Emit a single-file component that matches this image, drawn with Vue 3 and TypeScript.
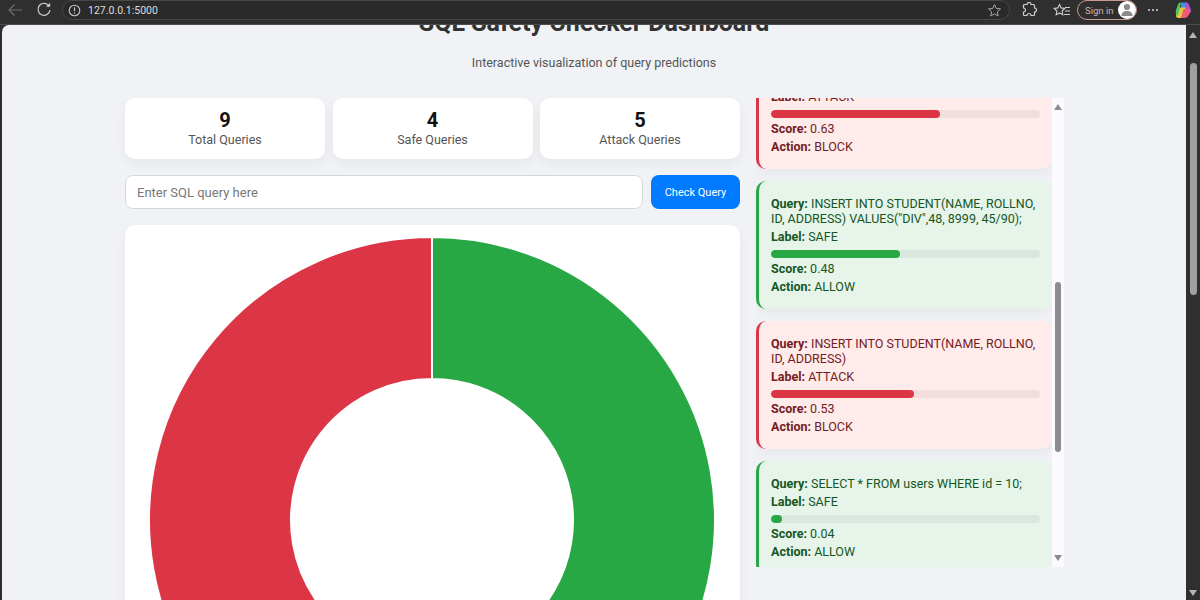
<script setup lang="ts">
interface Entry {
  query: string
  label: 'SAFE' | 'ATTACK'
  score: number
  action: string
}

const stats = [
  { value: 9, name: 'Total Queries' },
  { value: 4, name: 'Safe Queries' },
  { value: 5, name: 'Attack Queries' },
]

const entries: Entry[] = [
  { query: 'DROP TABLE STUDENT;', label: 'ATTACK', score: 0.63, action: 'BLOCK' },
  { query: 'INSERT INTO STUDENT(NAME, ROLLNO, ID, ADDRESS) VALUES("DIV",48, 8999, 45/90);', label: 'SAFE', score: 0.48, action: 'ALLOW' },
  { query: 'INSERT INTO STUDENT(NAME, ROLLNO, ID, ADDRESS)', label: 'ATTACK', score: 0.53, action: 'BLOCK' },
  { query: 'SELECT * FROM users WHERE id = 10;', label: 'SAFE', score: 0.04, action: 'ALLOW' },
]
</script>

<template>
  <div class="window">
    <header class="toolbar">
      <svg class="tool back" width="16" height="14" viewBox="0 0 16 14"><path d="M15 7H2M7.500 1.500 2 7l5.500 5.500" fill="none" stroke="#6f6f6f" stroke-width="1.200"/></svg>
      <svg class="tool reload" width="16" height="16" viewBox="0 0 16 16"><path d="M13.200 4.200A6 6 0 1 0 14 8" fill="none" stroke="#d0d0d0" stroke-width="1.200"/><path d="M10 4.700h4.200V.8z" fill="#d0d0d0"/></svg>
      <div class="address">
        <svg width="13" height="13" viewBox="0 0 13 13"><circle cx="6.500" cy="6.500" r="5.300" fill="none" stroke="#c4c4c4" stroke-width="1.100"/><path d="M6.500 3.200v4M6.500 8.500v1.300" stroke="#c4c4c4" stroke-width="1.200"/></svg>
        <span class="url">127.0.0.1:5000</span>
        <svg class="star" width="15" height="15" viewBox="0 0 15 15"><path d="m7.500 1.500 1.800 3.900 4.200.5-3.100 2.900.8 4.200-3.700-2.100-3.700 2.100.8-4.200-3.100-2.900 4.200-.5z" fill="none" stroke="#a8a8a8" stroke-width="1"/></svg>
      </div>
      <svg class="tool puzzle" width="16" height="16" viewBox="0 0 16 16"><path d="M6 2.500a2 2 0 0 1 4 0h2.500a1 1 0 0 1 1 1V6a2 2 0 0 1 0 4v2.500a1 1 0 0 1-1 1H10a2 2 0 0 0-4 0H3.500a1 1 0 0 1-1-1V10a2 2 0 0 0 0-4V3.500a1 1 0 0 1 1-1z" fill="none" stroke="#d0d0d0" stroke-width="1.200"/></svg>
      <svg class="tool favs" width="18" height="15" viewBox="0 0 18 15"><path d="m6.500 1.500 1.600 3.400 3.700.5-2.700 2.600.7 3.700-3.300-1.800-3.300 1.800.7-3.700L1.200 5.400l3.700-.5zM12 4.500h5M12 8h5M11 11.500h6" fill="none" stroke="#d0d0d0" stroke-width="1.100"/></svg>
      <div class="signin">
        <span>Sign in</span>
        <span class="avatar">
          <svg width="16" height="16" viewBox="0 0 16 16"><circle cx="8" cy="5" r="3.100" fill="#8a8a8a"/><path d="M2.500 14c0-3.500 2.200-5 5.500-5s5.500 1.500 5.500 5z" fill="#8a8a8a"/></svg>
        </span>
      </div>
      <span class="dots"><i></i><i></i><i></i></span>
      <svg class="copilot" width="18" height="18" viewBox="0 0 18 18">
        <path d="M7 1.500h4.500c1.500 0 2.300.8 2.800 2.200l-2.800 7H7z" fill="#3f8de8"/>
        <path d="M11 1.500c2-.5 3.300.5 4 2.500l2 5c.5 2-.5 3-2 3h-3.500z" fill="#b44fd0"/>
        <path d="M6 6.500h5.500l-2 8c-.4 1.500-1.500 2.500-3 2.500H4.500c-2 0-3-1.500-2.500-3z" fill="#e8c93c"/>
        <path d="M2 9 4 3.500C4.500 2 5.500 1.500 7 1.500L5 11l-1.500 4C2 14.500 1.300 12 2 9z" fill="#4fc46a"/>
        <path d="M9.500 8h6.500c.5 3-.5 5-2 7-.7 1.200-2 2-3.500 2H7z" fill="#ec5d73"/>
      </svg>
    </header>

    <div class="viewport">
      <main class="page">
        <div class="head">
          <h1>SQL Safety Checker Dashboard</h1>
          <p>Interactive visualization of query predictions</p>
        </div>

        <div class="columns">
          <section class="left">
            <div class="stats">
              <div v-for="s in stats" :key="s.name" class="stat">
                <strong>{{ s.value }}</strong>
                <span>{{ s.name }}</span>
              </div>
            </div>

            <form class="check" @submit.prevent>
              <input type="text" placeholder="Enter SQL query here" />
              <button type="submit">Check Query</button>
            </form>

            <div class="chart">
              <svg width="566" height="566" viewBox="-283 -283 566 566">
                <path d="M0 -283A283 283 0 0 1 96.790 265.930L48.220 132.500A141 141 0 0 0 0 -141Z" fill="#28a745" stroke="#fff" stroke-width="2"/>
                <path d="M96.790 265.930A283 283 0 1 1 0 -283L0 -141A141 141 0 1 0 48.220 132.500Z" fill="#dc3545" stroke="#fff" stroke-width="2"/>
              </svg>
            </div>
          </section>

          <aside class="history">
            <div class="list">
              <div class="list-inner">
                <article v-for="e in entries" :key="e.query" class="entry" :class="e.label === 'SAFE' ? 'safe' : 'attack'">
                  <p><b>Query:</b> {{ e.query }}</p>
                  <p><b>Label:</b> {{ e.label }}</p>
                  <div class="track"><div class="fill" :style="{ width: e.score * 100 + '%' }"></div></div>
                  <p><b>Score:</b> {{ e.score.toFixed(2) }}</p>
                  <p><b>Action:</b> {{ e.action }}</p>
                </article>
              </div>
            </div>
            <div class="list-bar">
              <i class="up"></i>
              <div class="lane"><div class="thumb"></div></div>
              <i class="down"></i>
            </div>
          </aside>
        </div>
      </main>

      <div class="win-bar">
        <i class="up"></i>
        <div class="lane"><div class="thumb"></div></div>
        <i class="down"></i>
      </div>
    </div>
  </div>
</template>

<style>
html, body { margin: 0; background: #2f2f2f; }
</style>

<style scoped>
.window {
  width: 1200px;
  height: 600px;
  display: flex;
  flex-direction: column;
  overflow: hidden;
  background: #2f2f2f;
  font-family: Roboto, "Liberation Sans", sans-serif;
}
.toolbar {
  height: 25px;
  flex: none;
  display: flex;
  align-items: center;
  padding: 0 8px 4px 7px;
  box-sizing: border-box;
  border-bottom: 1px solid #4c4c4c;
  color: #e0e0e0;
}
.tool { flex: none; }
.reload { margin-left: 13px; }
.address {
  flex: none;
  width: 948px;
  height: 20px;
  margin-left: 10px;
  box-sizing: border-box;
  border: 1px solid #484848;
  border-radius: 10px;
  display: flex;
  align-items: center;
  padding: 0 7px 0 5px;
  background: #2a2a2a;
}
.url { margin-left: 7px; font-size: 10.500px; color: #dedede; flex: 1; }
.puzzle { margin-left: 11px; }
.favs { margin-left: 16px; }
.signin {
  flex: none;
  width: 60px;
  height: 20px;
  margin-left: 6px;
  box-sizing: border-box;
  border: 1px solid #c89a8e;
  border-radius: 10px;
  display: flex;
  align-items: center;
  justify-content: space-between;
  padding-left: 7px;
  font-size: 9.500px;
  color: #cdb3ac;
}
.avatar {
  width: 18px;
  height: 18px;
  border-radius: 50%;
  background: #fff;
  display: flex;
  align-items: center;
  justify-content: center;
}
.dots { display: flex; gap: 2px; margin-left: 11px; }
.dots i { width: 2px; height: 2px; border-radius: 50%; background: #d8d8d8; }
.copilot { margin-left: 16px; flex: none; }

.viewport { flex: 1; display: flex; min-height: 0; }
.page {
  flex: 1;
  margin-left: 2px;
  background: #f0f2f5;
  border-radius: 7px 0 0 0;
  overflow: hidden;
  color: #333;
}
.head { margin-top: -16px; text-align: center; }
.head h1 { margin: 0; font-size: 25px; line-height: 28px; font-weight: 700; color: #333; }
.head p { margin: 18px 0 0; font-size: 12.500px; line-height: 16px; color: #555; }

.columns {
  display: flex;
  align-items: flex-start;
  gap: 16px;
  width: 939px;
  margin: 27px 0 0 123px;
}
.left { width: 615px; flex: none; }
.stats { display: flex; gap: 7.500px; }
.stat {
  flex: 1;
  height: 61px;
  box-sizing: border-box;
  background: #fff;
  border-radius: 10px;
  box-shadow: 0 4px 12px rgba(0, 0, 0, 0.05);
  display: flex;
  flex-direction: column;
  align-items: center;
  justify-content: center;
}
.stat strong { font-size: 20px; line-height: 23px; color: #111; }
.stat span { font-size: 12.500px; line-height: 16px; color: #555; }
.check { display: flex; gap: 8px; margin-top: 16px; }
.check input {
  flex: 1;
  min-width: 0;
  height: 34px;
  box-sizing: border-box;
  border: 1px solid #d5d7da;
  border-radius: 8px;
  padding: 0 11px;
  font: 13px Roboto, "Liberation Sans", sans-serif;
  background: #fff;
  outline: none;
}
.check input::placeholder { color: #777; }
.check button {
  width: 89px;
  height: 34px;
  flex: none;
  border: 0;
  border-radius: 8px;
  background: #007bff;
  color: #fff;
  font: 11px Roboto, "Liberation Sans", sans-serif;
}
.chart {
  margin-top: 16px;
  padding: 12px 0 40px;
  background: #fff;
  border-radius: 10px;
  box-shadow: 0 4px 12px rgba(0, 0, 0, 0.05);
  display: flex;
  justify-content: center;
}
.chart svg { display: block; margin-right: 1px; }

.history { flex: none; width: 308px; height: 469px; display: flex; background: #fff; }
.list { flex: 1; overflow: hidden; background: #f0f2f5; }
.list-inner { margin-top: -42px; display: flex; flex-direction: column; gap: 12px; }
.entry {
  border-left: 3px solid;
  border-radius: 10px;
  padding: 15px 12px;
  font-size: 12.500px;
  line-height: 15px;
  box-shadow: 0 4px 12px rgba(0, 0, 0, 0.05);
}
.entry p { margin: 0 0 3px; }
.entry p:last-child { margin-bottom: 0; }
.safe { background: #e6f4ea; border-color: #28a745; color: #155724; }
.attack { background: #ffebe9; border-color: #dc3545; color: #721c24; }
.track {
  height: 8px;
  margin: 6px 0 3px;
  border-radius: 4px;
  background: rgba(0, 0, 0, 0.05);
  overflow: hidden;
}
.fill { height: 100%; border-radius: 4px; }
.safe .fill { background: #28a745; }
.attack .fill { background: #dc3545; }

.list-bar, .win-bar { flex: none; display: flex; flex-direction: column; align-items: center; }
.list-bar { width: 12px; height: 469px; padding: 6px 0; box-sizing: border-box; background: #fbfbfd; }
.lane { flex: 1; }
.list-bar .thumb { width: 6px; height: 170px; margin-top: 172px; border-radius: 3px; background: #8c8c8c; }
.up, .down { width: 0; height: 0; border-left: 4px solid transparent; border-right: 4px solid transparent; }
.list-bar .up { border-bottom: 6px solid #8c8c8c; }
.list-bar .down { border-top: 6px solid #8c8c8c; }
.win-bar { width: 14px; padding: 7px 0 4px; box-sizing: border-box; background: #2f2f2f; }
.win-bar .thumb { width: 7px; height: 232px; margin-top: 25px; border-radius: 4px; background: #a0a0a0; }
.win-bar .up { border-bottom: 6px solid #b5b5b5; }
.win-bar .down { border-top: 6px solid #b5b5b5; }
</style>
